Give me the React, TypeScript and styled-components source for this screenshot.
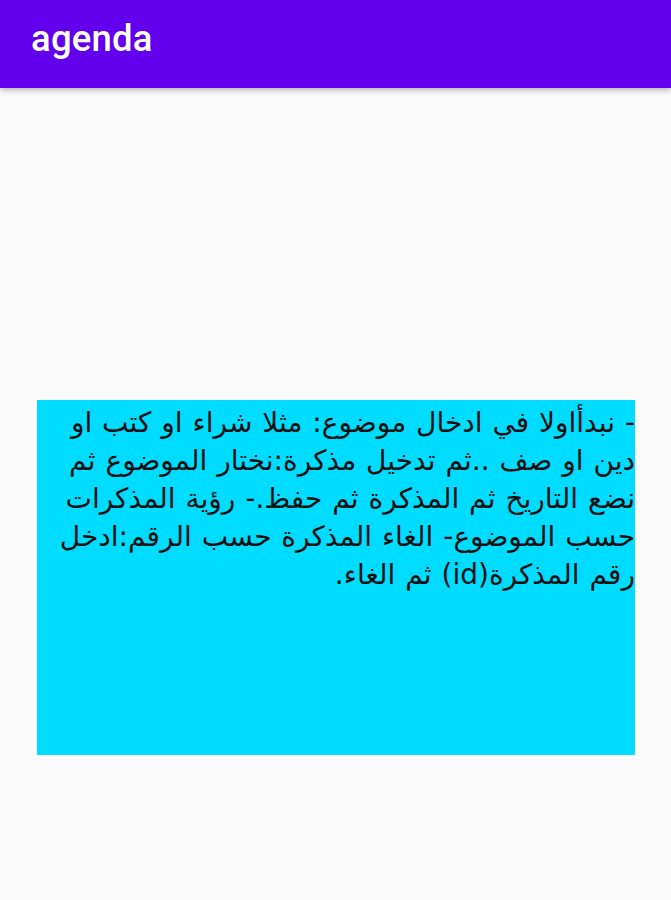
import React from 'react';
import styled, { createGlobalStyle } from 'styled-components';

const GlobalStyle = createGlobalStyle`
  html, body {
    margin: 0;
    padding: 0;
    background: #fafafa;
  }
  * {
    box-sizing: border-box;
  }
`;

const Screen = styled.div`
  min-height: 900px;
  background: #fafafa;
  display: flex;
  flex-direction: column;
`;

const AppBar = styled.header`
  height: 88px;
  background: #6200ee;
  display: flex;
  align-items: center;
  padding: 0 31px;
  box-shadow: 0 2px 6px rgba(0, 0, 0, 0.3);
  position: relative;
  z-index: 1;
`;

const Title = styled.h1`
  margin: 0;
  color: #ffffff;
  font-family: Roboto, 'Noto Sans', sans-serif;
  font-weight: 500;
  font-size: 36.5px;
  letter-spacing: 0.2px;
  margin-top: -12px;
`;

const Content = styled.main`
  padding: 312px 36px 0 37px;
`;

const NoteBox = styled.div`
  width: 598px;
  height: 355px;
  background: #00dcff;
  direction: rtl;
  text-align: right;
  color: #111;
  font-family: 'DejaVu Sans', sans-serif;
  font-size: 28px;
  line-height: 38px;
  word-spacing: 1px;
  padding: 4px 0 0 6px;
`;

const App: React.FC = () => {
  return (
    <>
      <GlobalStyle />
      <Screen>
        <AppBar>
          <Title>agenda</Title>
        </AppBar>
        <Content>
          <NoteBox>
            - نبدأاولا في ادخال موضوع: مثلا شراء او كتب او دين او صف ..ثم تدخيل مذكرة:نختار الموضوع ثم نضع التاريخ ثم المذكرة ثم حفظ.- رؤية المذكرات حسب الموضوع- الغاء المذكرة حسب الرقم:ادخل رقم المذكرة(id) ثم الغاء.
          </NoteBox>
        </Content>
      </Screen>
    </>
  );
};

export default App;
